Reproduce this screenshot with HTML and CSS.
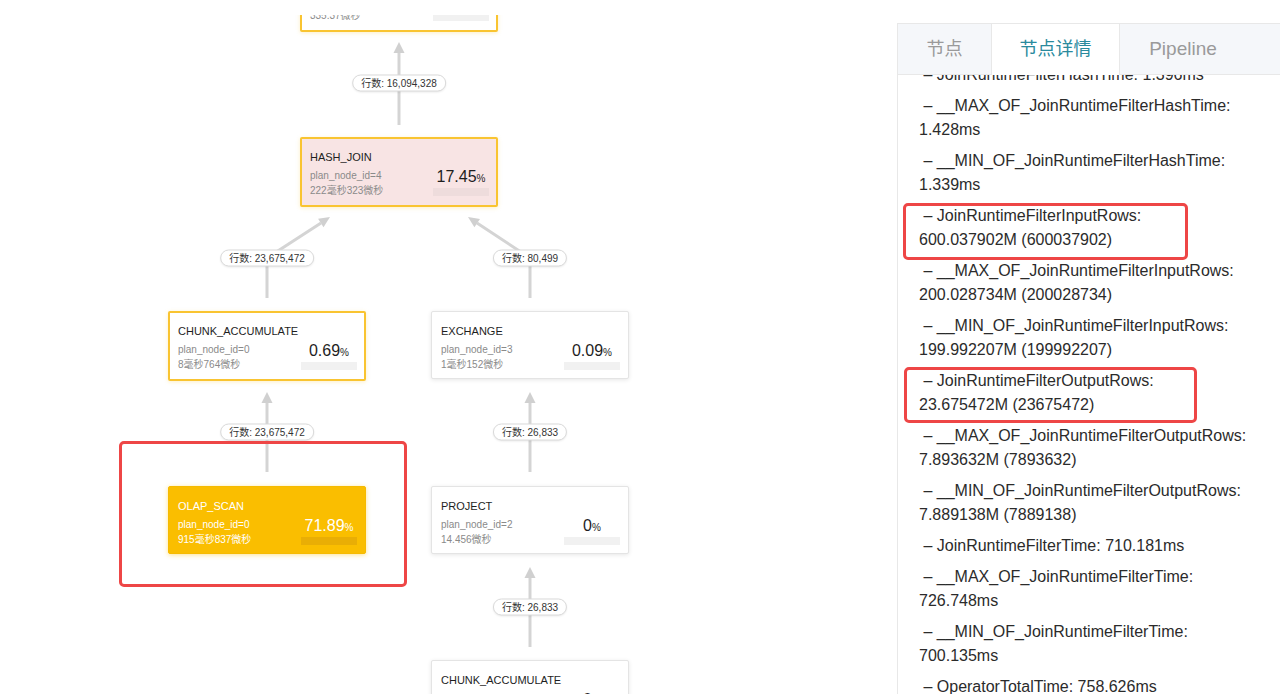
FILE: index.html
```html
<!DOCTYPE html>
<html lang="zh-CN">
<head>
<meta charset="utf-8">
<title>Profile</title>
<link rel="stylesheet" href="styles.css">
</head>
<body>
<div class="page">
  <div class="canvas">
    <svg class="edges" width="897" height="694" viewBox="0 0 897 694">
      <g class="edge-line">
        <line x1="399" y1="125" x2="399" y2="52"/>
        <polyline points="267,298 267,258 321,223"/>
        <polyline points="530,298 530,258 477,223"/>
        <line x1="267" y1="472" x2="267" y2="402"/>
        <line x1="530" y1="472" x2="530" y2="402"/>
        <line x1="530" y1="647" x2="530" y2="577"/>
      </g>
      <g class="edge-head">
        <polygon points="399,42 393.5,53 404.5,53"/>
        <polygon points="330,217 323.5,227.2 318.1,218.8"/>
        <polygon points="468,217 480,218.9 474.4,227.3"/>
        <polygon points="267,392 261.5,403 272.5,403"/>
        <polygon points="530,392 524.5,403 535.5,403"/>
        <polygon points="530,567 524.5,578 535.5,578"/>
      </g>
    </svg>

    <div class="node hot n-top">
      <div class="info">
        <div class="title">AGGREGATE</div>
        <div class="meta">plan_node_id=5</div>
        <div class="meta">335.37微秒</div>
      </div>
      <div class="cost">
        <div class="pct"></div>
        <div class="bar"></div>
      </div>
    </div>

    <div class="node hot pink n-hash">
      <div class="info">
        <div class="title">HASH_JOIN</div>
        <div class="meta">plan_node_id=4</div>
        <div class="meta">222毫秒323微秒</div>
      </div>
      <div class="cost">
        <div class="pct">17.45<small>%</small></div>
        <div class="bar"></div>
      </div>
    </div>

    <div class="node hot n-chunk1">
      <div class="info">
        <div class="title">CHUNK_ACCUMULATE</div>
        <div class="meta">plan_node_id=0</div>
        <div class="meta">8毫秒764微秒</div>
      </div>
      <div class="cost">
        <div class="pct">0.69<small>%</small></div>
        <div class="bar"></div>
      </div>
    </div>

    <div class="node n-exchange">
      <div class="info">
        <div class="title">EXCHANGE</div>
        <div class="meta">plan_node_id=3</div>
        <div class="meta">1毫秒152微秒</div>
      </div>
      <div class="cost">
        <div class="pct">0.09<small>%</small></div>
        <div class="bar"></div>
      </div>
    </div>

    <div class="node scan n-olap">
      <div class="info">
        <div class="title">OLAP_SCAN</div>
        <div class="meta">plan_node_id=0</div>
        <div class="meta">915毫秒837微秒</div>
      </div>
      <div class="cost">
        <div class="pct">71.89<small>%</small></div>
        <div class="bar"></div>
      </div>
    </div>

    <div class="node n-project">
      <div class="info">
        <div class="title">PROJECT</div>
        <div class="meta">plan_node_id=2</div>
        <div class="meta">14.456微秒</div>
      </div>
      <div class="cost">
        <div class="pct">0<small>%</small></div>
        <div class="bar"></div>
      </div>
    </div>

    <div class="node n-chunk2">
      <div class="info">
        <div class="title">CHUNK_ACCUMULATE</div>
        <div class="meta">plan_node_id=1</div>
        <div class="meta">9.837微秒</div>
      </div>
      <div class="cost">
        <div class="pct">0<small>%</small></div>
        <div class="bar"></div>
      </div>
    </div>

    <div class="rows r1">行数: 16,094,328</div>
    <div class="rows r2">行数: 23,675,472</div>
    <div class="rows r3">行数: 80,499</div>
    <div class="rows r4">行数: 23,675,472</div>
    <div class="rows r5">行数: 26,833</div>
    <div class="rows r6">行数: 26,833</div>

    <div class="callout"></div>
  </div>

  <div class="panel">
    <div class="tabs">
      <div class="tab t-nodes">节点</div>
      <div class="tab t-detail active">节点详情</div>
      <div class="tab t-pipe">Pipeline</div>
    </div>
    <div class="detail">
      <div class="metrics">
        <p class="metric"><span class="ln">&nbsp;– JoinRuntimeFilterHashTime: 1.396ms</span></p>
        <p class="metric"><span class="ln">&nbsp;– __MAX_OF_JoinRuntimeFilterHashTime:</span><span class="ln">1.428ms</span></p>
        <p class="metric"><span class="ln">&nbsp;– __MIN_OF_JoinRuntimeFilterHashTime:</span><span class="ln">1.339ms</span></p>
        <p class="metric mark-a"><span class="ln">&nbsp;– JoinRuntimeFilterInputRows:</span><span class="ln">600.037902M (600037902)</span></p>
        <p class="metric"><span class="ln">&nbsp;– __MAX_OF_JoinRuntimeFilterInputRows:</span><span class="ln">200.028734M (200028734)</span></p>
        <p class="metric"><span class="ln">&nbsp;– __MIN_OF_JoinRuntimeFilterInputRows:</span><span class="ln">199.992207M (199992207)</span></p>
        <p class="metric mark-b"><span class="ln">&nbsp;– JoinRuntimeFilterOutputRows:</span><span class="ln">23.675472M (23675472)</span></p>
        <p class="metric"><span class="ln">&nbsp;– __MAX_OF_JoinRuntimeFilterOutputRows:</span><span class="ln">7.893632M (7893632)</span></p>
        <p class="metric"><span class="ln">&nbsp;– __MIN_OF_JoinRuntimeFilterOutputRows:</span><span class="ln">7.889138M (7889138)</span></p>
        <p class="metric"><span class="ln">&nbsp;– JoinRuntimeFilterTime: 710.181ms</span></p>
        <p class="metric"><span class="ln">&nbsp;– __MAX_OF_JoinRuntimeFilterTime:</span><span class="ln">726.748ms</span></p>
        <p class="metric"><span class="ln">&nbsp;– __MIN_OF_JoinRuntimeFilterTime:</span><span class="ln">700.135ms</span></p>
        <p class="metric"><span class="ln">&nbsp;– OperatorTotalTime: 758.626ms</span></p>
      </div>
    </div>
  </div>
</div>
</body>
</html>
```

FILE: styles.css
```css
* { box-sizing: border-box; }

html, body {
  margin: 0;
  height: 100%;
}

body {
  font-family: "Liberation Sans", "Noto Sans CJK SC", Arial, sans-serif;
  color: #333;
  background: #fff;
  overflow: hidden;
}

.page {
  display: flex;
  height: 694px;
}

/* ---------- canvas ---------- */
.canvas {
  position: relative;
  flex: 0 0 897px;
  height: 694px;
  overflow: hidden;
  clip-path: inset(15px 0 0 0);
}

.edges {
  position: absolute;
  left: 0;
  top: 0;
}

.edge-line line,
.edge-line polyline {
  fill: none;
  stroke: #d4d4d4;
  stroke-width: 3;
}

.edge-head polygon {
  fill: #d0d0d0;
}

.node {
  position: absolute;
  width: 198px;
  height: 70px;
  display: flex;
  justify-content: space-between;
  padding: 12px 8px 0 9px;
  background: #fff;
  border: 1px solid #e4e4e4;
  border-radius: 2px;
  box-shadow: 0 1px 4px rgba(0, 0, 0, 0.10);
  color: #1e1e1e;
}

.node.hot {
  border: 2px solid #f9c431;
  padding: 11px 7px 0 8px;
  box-shadow: 0 1px 4px rgba(249, 190, 30, 0.25);
}

.node.pink {
  background: #f8e4e4;
}

.node.scan {
  background: #fabe00;
  border: 1px solid #f6ba00;
  box-shadow: 0 1px 5px rgba(250, 190, 0, 0.45);
  color: #fff;
}

.title {
  font-size: 11px;
  line-height: 14px;
  white-space: nowrap;
}

.meta {
  font-size: 10px;
  line-height: 15px;
  color: #8a8a8a;
  white-space: nowrap;
}

.title + .meta {
  margin-top: 4px;
}

.scan .meta {
  color: #fff;
}

.cost {
  width: 56px;
  padding-top: 17px;
  text-align: center;
}

.pct {
  font-size: 16px;
  line-height: 20px;
  height: 20px;
  color: #1e1e1e;
  white-space: nowrap;
}

.pct small {
  font-size: 10px;
}

.scan .pct {
  color: #fff;
}

.bar {
  margin-top: 1px;
  height: 8px;
  background: #f1f1f1;
}

.pink .bar {
  background: #eedcdc;
}

.scan .bar {
  background: #e9ae05;
}

.n-top { left: 300px; top: -38px; }
.n-hash { left: 300px; top: 137px; }
.n-chunk1 { left: 168px; top: 311px; }
.n-exchange { left: 431px; top: 311px; height: 68px; }
.n-olap { left: 168px; top: 486px; height: 68px; }
.n-project { left: 431px; top: 486px; height: 68px; }
.n-chunk2 { left: 431px; top: 660px; }

.rows {
  position: absolute;
  transform: translate(-50%, -50%);
  height: 17px;
  padding: 0 8px;
  font-size: 10px;
  line-height: 15px;
  color: #333;
  background: #fff;
  border: 1px solid #dadada;
  border-radius: 9px;
  box-shadow: 0 1px 2px rgba(0, 0, 0, 0.08);
  white-space: nowrap;
}

.r1 { left: 399px; top: 83px; }
.r2 { left: 267px; top: 258px; }
.r3 { left: 530px; top: 258px; }
.r4 { left: 267px; top: 432px; }
.r5 { left: 530px; top: 432px; }
.r6 { left: 530px; top: 607px; }

.callout {
  position: absolute;
  left: 119px;
  top: 441px;
  width: 288px;
  height: 146px;
  border: 3px solid #ee4646;
  border-radius: 5px;
}

/* ---------- panel ---------- */
.panel {
  flex: 0 0 383px;
  margin-top: 23px;
  height: 671px;
  display: flex;
  flex-direction: column;
  border-top: 1px solid #e8e8e8;
  border-left: 1px solid #e8e8e8;
}

.tabs {
  display: flex;
  height: 51px;
  flex: 0 0 51px;
  background: #f5f7fa;
  border-bottom: 1px solid #e8e8e8;
}

.tab {
  height: 50px;
  line-height: 50px;
  font-size: 18px;
  color: #9a9a9a;
  text-align: center;
  white-space: nowrap;
}

.t-nodes { width: 93px; }
.t-detail { width: 129px; }
.t-pipe { width: 126px; font-size: 19px; }

.tab.active {
  height: 51px;
  background: #fff;
  color: #2a8a9d;
  border-left: 1px solid #e8e8e8;
  border-right: 1px solid #e8e8e8;
}

.detail {
  flex: 1;
  overflow: hidden;
  padding-left: 21px;
}

.metrics {
  margin-top: -12px;
}

.metric {
  position: relative;
  margin: 0 0 7px;
  font-size: 16px;
  line-height: 24px;
  color: #2b2b2b;
}

.ln {
  display: block;
  white-space: nowrap;
}

.mark-a::after,
.mark-b::after {
  content: "";
  position: absolute;
  border: 3px solid #ee4646;
  border-radius: 5px;
  pointer-events: none;
}

.mark-a::after {
  left: -16px;
  top: -1px;
  width: 279px;
  height: 51px;
}

.mark-b::after {
  left: -15px;
  top: -2px;
  width: 287px;
  height: 50px;
}
```
